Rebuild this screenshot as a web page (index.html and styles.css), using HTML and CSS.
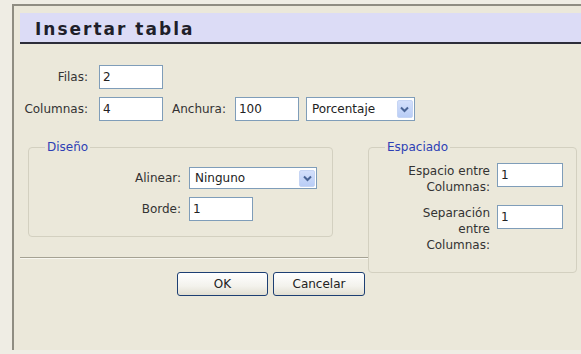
FILE: index.html
```html
<!DOCTYPE html>
<html lang="es">

<head>
  <meta charset="UTF-8">
  <meta name="viewport" content="width=device-width, initial-scale=1.0">
  <title>Insertar tabla</title>
  <link rel="stylesheet" href="styles.css">
</head>

<body>
  <div class="dialog">
    <div class="titlebar">
      <h1 class="title">Insertar tabla</h1>
    </div>

    <div class="form">
      <div class="row">
        <label class="lbl-main">Filas:</label>
        <input class="field w64" type="text" value="2">
      </div>
      <div class="row">
        <label class="lbl-main">Columnas:</label>
        <input class="field w64" type="text" value="4">
        <label class="lbl-anchura">Anchura:</label>
        <input class="field w64" type="text" value="100">
        <div class="select select-unit">
          <span>Porcentaje</span>
          <span class="arrow"><svg width="9" height="7" viewBox="0 0 9 7"><path d="M1 1.5 L4.5 5 L8 1.5" fill="none" stroke="#4a6596" stroke-width="2"/></svg></span>
        </div>
      </div>

      <div class="panels">
        <div class="left">
          <fieldset class="fs fs-design">
            <legend>Diseño</legend>
            <div class="fs-row first">
              <label class="lbl-design">Alinear:</label>
              <div class="select select-align">
                <span>Ninguno</span>
                <span class="arrow"><svg width="9" height="7" viewBox="0 0 9 7"><path d="M1 1.5 L4.5 5 L8 1.5" fill="none" stroke="#4a6596" stroke-width="2"/></svg></span>
              </div>
            </div>
            <div class="fs-row">
              <label class="lbl-design">Borde:</label>
              <input class="field w64" type="text" value="1">
            </div>
          </fieldset>

          <hr class="sep">

          <div class="actions">
            <button class="btn btn-ok">OK</button>
            <button class="btn btn-cancel">Cancelar</button>
          </div>
        </div>

        <fieldset class="fs fs-spacing">
          <legend>Espaciado</legend>
          <div class="sp-row first">
            <label class="lbl-spacing">Espacio entre Columnas:</label>
            <input class="field w66" type="text" value="1">
          </div>
          <div class="sp-row">
            <label class="lbl-spacing">Separación entre Columnas:</label>
            <input class="field w66" type="text" value="1">
          </div>
        </fieldset>
      </div>
    </div>
  </div>
</body>

</html>
```

FILE: styles.css
```css
* {
  margin: 0;
  padding: 0;
  box-sizing: border-box;
}

body {
  background-color: #efede4;
  font-family: "DejaVu Sans", sans-serif;
  font-size: 12px;
  color: #333;
}

.dialog {
  margin: 4px 0 0 12px;
  height: 346px;
  padding: 7px 0 0 6px;
  background-color: #ebe8da;
  border-top: 2px solid #8f8d82;
  border-left: 2px solid #8f8d82;
}

.titlebar {
  height: 31px;
  padding: 6px 0 0 15px;
  background-color: #dcdcf6;
  border-bottom: 2px solid #2d2d3a;
}

.title {
  font-size: 17px;
  line-height: 21px;
  font-weight: bold;
  letter-spacing: 2px;
  color: #1f1f2a;
}

.form {
  padding-top: 21px;
}

.row {
  display: flex;
  align-items: center;
}

.row+.row {
  margin-top: 8px;
}

.lbl-main {
  width: 68px;
  margin-right: 11px;
  text-align: right;
}

.lbl-anchura {
  margin: 0 9px;
}

.field {
  height: 24px;
  padding: 0 3px;
  background-color: #fff;
  border: 1px solid #7f9db9;
  font-family: inherit;
  font-size: 12px;
  color: #222;
  outline: none;
}

.w64 {
  width: 64px;
}

.w66 {
  width: 66px;
}

.select {
  display: flex;
  align-items: center;
  height: 24px;
  padding: 0 1px 0 5px;
  background-color: #fff;
  border: 1px solid #7f9db9;
  color: #222;
}

.select .arrow {
  display: flex;
  align-items: center;
  justify-content: center;
  width: 16px;
  height: 18px;
  margin-left: auto;
  background: linear-gradient(#d4e0fb, #b9cdf6);
  border: 1px solid #c6d5f4;
  border-radius: 2px;
}

.select-unit {
  width: 109px;
  margin-left: 7px;
}

.select-align {
  width: 128px;
  height: 22px;
}

.select-align .arrow {
  height: 17px;
}

.panels {
  display: flex;
  align-items: flex-start;
  margin-top: 19px;
}

.left {
  width: 348px;
}

.fs {
  border: 1px solid #d3d0c0;
  border-radius: 4px;
}

.fs legend {
  margin-left: 16px;
  padding: 0 2px;
  line-height: 15px;
  color: #2d40b5;
}

.fs-design {
  width: 305px;
  margin-left: 8px;
  padding-bottom: 15px;
}

.fs-row {
  display: flex;
  align-items: center;
}

.fs-row.first {
  margin-top: 12px;
}

.fs-row+.fs-row {
  margin-top: 8px;
}

.lbl-design {
  width: 152px;
  margin-right: 8px;
  text-align: right;
}

.sep {
  margin-top: 20px;
  border: 0;
  border-top: 1px solid #a5a293;
  border-bottom: 1px solid #f8f7f0;
}

.actions {
  display: flex;
  gap: 5px;
  margin-top: 13px;
  padding-left: 157px;
}

.btn {
  height: 24px;
  background: linear-gradient(#ffffff, #f3f2ec 60%, #e2dfd2);
  border: 1px solid #1d3f73;
  border-radius: 3px;
  font-family: inherit;
  font-size: 12px;
  color: #222;
}

.btn-ok {
  width: 91px;
}

.btn-cancel {
  width: 92px;
}

.fs-spacing {
  width: 209px;
  padding-bottom: 19px;
}

.sp-row {
  display: flex;
  align-items: flex-start;
  margin-top: 10px;
}

.sp-row.first {
  margin-top: 8px;
}

.lbl-spacing {
  width: 90px;
  margin: 0 7px 0 31px;
  line-height: 16px;
  text-align: right;
}
```
